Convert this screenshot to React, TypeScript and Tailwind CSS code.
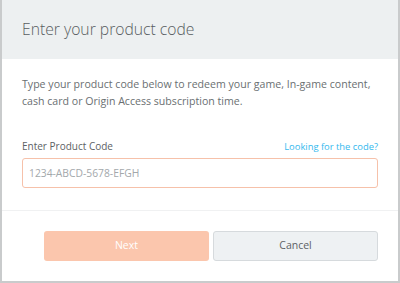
import React, { useState } from "react";

export default function App() {
  const [code, setCode] = useState("");

  return (
    <div className="w-[400px] h-[283px] flex flex-col bg-white border-2 border-t-0 border-[#c9cbcc] font-['Open_Sans',sans-serif] overflow-hidden">
      {/* HEADER */}
      <div className="h-[59px] shrink-0 bg-[#edf0f1] flex items-center px-5">
        <h1 className="text-[15.7px] text-[#585d60] font-light">Enter your product code</h1>
      </div>

      {/* BODY */}
      <div className="px-5 pt-[17px] pb-[22px] border-b border-[#f0f1f2]">
        <p className="text-[10.6px] leading-[17px] text-[#6a6f72]">
          Type your product code below to redeem your game, In-game content, cash card or Origin Access subscription time.
        </p>

        <div className="mt-[29px] flex justify-between items-center text-[10px] leading-[15px]">
          <label className="text-[#5d6265]">Enter Product Code</label>
          <a href="#" className="text-[#35b9ee] text-[9.4px]">Looking for the code?</a>
        </div>

        <input
          value={code}
          onChange={(e) => setCode(e.target.value)}
          placeholder="1234-ABCD-5678-EFGH"
          className="mt-[4px] w-full h-[30px] px-[6px] rounded-[3px] border border-[#f6c1aa] text-[10.3px] text-[#555] placeholder:text-[#a3a8ab] outline-none caret-[#666]"
        />
      </div>

      {/* FOOTER */}
      <div className="flex-1 flex items-center justify-end gap-1 px-5">
        <button className="w-[165px] h-[30px] rounded-[3px] bg-[#fbc6ad] text-white text-[10.5px]">Next</button>
        <button className="w-[165px] h-[30px] rounded-[3px] bg-[#eef1f3] border border-[#d6dadd] text-[#5d6265] text-[10.5px]">Cancel</button>
      </div>
    </div>
  );
}
